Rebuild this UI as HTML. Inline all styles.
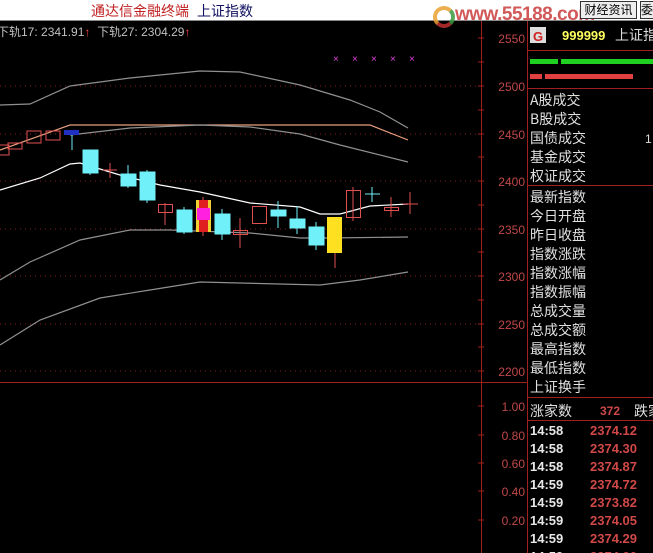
<!DOCTYPE html><html><head><meta charset="utf-8"><style>
body{margin:0;width:653px;height:553px;overflow:hidden;background:#000;font-family:"Liberation Sans","Noto Sans CJK SC",sans-serif;position:relative}
.t{position:absolute;white-space:nowrap}
</style></head><body>
<div style="position:absolute;left:0;top:0;width:653px;height:20px;background:#fff;border-bottom:1px solid #888"></div>
<div class="t" style="left:91px;top:1px;font-size:14px;color:#c02020">通达信金融终端</div>
<div class="t" style="left:197px;top:1px;font-size:14px;color:#101060">上证指数</div>
<div class="t" style="left:455px;top:4px;font-size:19px;font-weight:bold;color:#c83030;opacity:.8;letter-spacing:-0.5px">www.55188.com</div>
<div style="position:absolute;left:433px;top:6px;width:14px;height:14px;border-radius:50%;border:4px solid #e9a030;border-right-color:#3a9a40;border-bottom-color:#c03030;opacity:.85"></div>
<div class="t" style="left:580px;top:1px;width:55px;height:16px;border:1px solid #333;background:#eee;font-size:12px;line-height:16px;text-align:center">财经资讯</div>
<div class="t" style="left:640px;top:1px;width:20px;height:16px;border:1px solid #333;background:#eee;font-size:12px;line-height:16px">委</div>
<div class="t" style="left:-3px;top:23px;font-size:12px;color:#c0c0c0">下轨17: 2341.91<span style="color:#f44">↑</span>&nbsp; 下轨27: 2304.29<span style="color:#f44">↑</span></div>
<svg width="653" height="553" style="position:absolute;left:0;top:0" xmlns="http://www.w3.org/2000/svg">
<g stroke="#802020" stroke-dasharray="1,4" stroke-width="1">
<line x1="0" y1="86" x2="480" y2="86"/><line x1="0" y1="134" x2="480" y2="134"/><line x1="0" y1="181" x2="480" y2="181"/><line x1="0" y1="229" x2="480" y2="229"/><line x1="0" y1="276" x2="480" y2="276"/><line x1="0" y1="324" x2="480" y2="324"/><line x1="0" y1="371" x2="480" y2="371"/>
</g>
<g stroke="#a02020" stroke-width="1" fill="none">
<line x1="481.5" y1="21" x2="481.5" y2="553"/>
<line x1="527.5" y1="21" x2="527.5" y2="553"/>
<line x1="0" y1="382.5" x2="527" y2="382.5"/>
<line x1="527" y1="50.5" x2="653" y2="50.5"/>
<line x1="527" y1="88.5" x2="653" y2="88.5"/>
<line x1="527" y1="185.5" x2="653" y2="185.5"/>
<line x1="527" y1="397.5" x2="653" y2="397.5"/>
<line x1="527" y1="420.5" x2="653" y2="420.5"/>
</g>
<g stroke="#a02020">
<line x1="478" y1="38" x2="484" y2="38"/><line x1="478" y1="62" x2="484" y2="62"/><line x1="478" y1="86" x2="484" y2="86"/><line x1="478" y1="110" x2="484" y2="110"/><line x1="478" y1="134" x2="484" y2="134"/><line x1="478" y1="157" x2="484" y2="157"/><line x1="478" y1="181" x2="484" y2="181"/><line x1="478" y1="205" x2="484" y2="205"/><line x1="478" y1="229" x2="484" y2="229"/><line x1="478" y1="252" x2="484" y2="252"/><line x1="478" y1="276" x2="484" y2="276"/><line x1="478" y1="300" x2="484" y2="300"/><line x1="478" y1="324" x2="484" y2="324"/><line x1="478" y1="347" x2="484" y2="347"/><line x1="478" y1="371" x2="484" y2="371"/>
<line x1="478" y1="406" x2="484" y2="406"/><line x1="478" y1="435" x2="484" y2="435"/><line x1="478" y1="463" x2="484" y2="463"/><line x1="478" y1="491" x2="484" y2="491"/><line x1="478" y1="520" x2="484" y2="520"/>
</g>
<g fill="none" stroke-width="1.2">
<polyline stroke="#909090" points="0,105 30,104 70,86 130,78 200,71 240,72 300,85 350,100 380,112 408,128"/>
<polyline stroke="#e8a080" points="0,150 70,125 370,125 408,140"/>
<polyline stroke="#909090" points="70,135 130,128 200,125 250,127 300,134 340,145 408,162"/>
<polyline stroke="#ffffff" points="0,190 40,178 70,164 80,163 120,175 160,185 200,192 250,203 300,207 320,214 340,214 370,206 408,204"/>
<polyline stroke="#909090" points="0,280 30,262 80,240 130,230 170,230 250,233 300,238 330,238 408,237"/>
<polyline stroke="#909090" points="0,345 40,320 100,298 150,290 200,282 320,285 360,280 408,272"/>
</g>
<g stroke="#e05050" fill="none" stroke-width="1">
<rect x="-5" y="145" width="14" height="10"/><rect x="8" y="143" width="14" height="6"/><rect x="27" y="131" width="14" height="12"/><rect x="46" y="131" width="14" height="9"/>
<line x1="110" y1="163" x2="110" y2="178"/><line x1="103" y1="170" x2="117" y2="170"/>
<line x1="165" y1="203" x2="165" y2="225"/><rect x="158.5" y="204.5" width="14" height="8"/>
<line x1="240" y1="218" x2="240" y2="248"/><rect x="233.5" y="230.5" width="14" height="4"/>
<rect x="252.5" y="206.5" width="14" height="17"/>
<line x1="353" y1="187" x2="353" y2="221"/><rect x="346.5" y="190.5" width="14" height="27"/>
<line x1="391" y1="197" x2="391" y2="217"/><rect x="384.5" y="207.5" width="14" height="3"/>
<line x1="410" y1="192" x2="410" y2="214"/><line x1="403" y1="204" x2="418" y2="204"/>
</g>
<g stroke="#70f0f8" fill="#70f0f8">
<line x1="72" y1="131" x2="72" y2="150"/>
<line x1="90" y1="150" x2="90" y2="175"/><rect x="83" y="150" width="15" height="23"/>
<line x1="128" y1="165" x2="128" y2="188"/><rect x="121" y="174" width="15" height="12"/>
<line x1="147" y1="170" x2="147" y2="203"/><rect x="140" y="172" width="15" height="28"/>
<line x1="184" y1="207" x2="184" y2="234"/><rect x="177" y="210" width="15" height="22"/>
<line x1="222" y1="209" x2="222" y2="240"/><rect x="215" y="214" width="15" height="20"/>
<line x1="278" y1="201" x2="278" y2="228"/><rect x="271" y="210" width="15" height="6"/>
<line x1="297" y1="206" x2="297" y2="234"/><rect x="290" y="219" width="15" height="9"/>
<line x1="316" y1="222" x2="316" y2="250"/><rect x="309" y="227" width="15" height="18"/>
<line x1="372" y1="187" x2="372" y2="202"/><line x1="365" y1="194" x2="380" y2="194"/>
</g>
<rect x="64" y="130" width="15" height="5" fill="#2030c0"/>
<line x1="203" y1="197" x2="203" y2="236" stroke="#e05050"/>
<rect x="196" y="200" width="15" height="32" fill="#f0d030"/><rect x="199" y="200" width="9" height="32" fill="#e02020"/><rect x="197" y="208" width="13" height="12" fill="#ff20e0"/>
<line x1="335" y1="253" x2="335" y2="268" stroke="#e05050"/>
<rect x="327" y="217" width="15" height="36" fill="#ffe020"/>
<g fill="#e040e0" font-size="10"><text x="333" y="62">×</text><text x="352" y="62">×</text><text x="371" y="62">×</text><text x="390" y="62">×</text><text x="409" y="62">×</text></g>
<g fill="#c04848" font-size="12" text-anchor="end" font-family="Liberation Sans">
<text x="525" y="43">2550</text><text x="525" y="91">2500</text><text x="525" y="139">2450</text><text x="525" y="186">2400</text><text x="525" y="234">2350</text><text x="525" y="281">2300</text><text x="525" y="329">2250</text><text x="525" y="376">2200</text>
<text x="525" y="411">1.00</text><text x="525" y="440">0.80</text><text x="525" y="468">0.60</text><text x="525" y="496">0.40</text><text x="525" y="525">0.20</text>
</g>
<rect x="530" y="27" width="16" height="16" fill="#ddd"/><text x="533" y="41" fill="#d02020" font-size="13" font-weight="bold">G</text>
<text x="562" y="40" fill="#ffff60" font-size="13" font-weight="bold">999999</text>
<text x="615" y="40" fill="#ddd" font-size="14" font-family="Noto Sans CJK SC">上证指</text>
<rect x="530" y="59" width="28" height="5" fill="#20d020"/><rect x="561" y="59" width="92" height="5" fill="#20d020"/>
<rect x="530" y="74" width="12" height="5" fill="#e04040"/><rect x="545" y="74" width="88" height="5" fill="#e04040"/>
<g fill="#e0e0e0" font-size="14" font-family="Noto Sans CJK SC">
<text x="530" y="105">A股成交</text><text x="530" y="124">B股成交</text><text x="530" y="143">国债成交</text><text x="530" y="162">基金成交</text><text x="530" y="181">权证成交</text>
<text x="530" y="202">最新指数</text><text x="530" y="221">今日开盘</text><text x="530" y="240">昨日收盘</text><text x="530" y="259">指数涨跌</text><text x="530" y="278">指数涨幅</text><text x="530" y="297">指数振幅</text><text x="530" y="316">总成交量</text><text x="530" y="335">总成交额</text><text x="530" y="354">最高指数</text><text x="530" y="373">最低指数</text><text x="530" y="392">上证换手</text>
<text x="530" y="416">涨家数</text><text x="634" y="416">跌家</text>
</g>
<text x="645" y="143" fill="#ddd" font-size="12">1</text>
<text x="600" y="415" fill="#d04848" font-size="12" font-weight="bold">372</text>
<g font-size="13" font-weight="bold">
<g fill="#e8e8e8"><text x="530" y="435">14:58</text><text x="530" y="453">14:58</text><text x="530" y="471">14:58</text><text x="530" y="489">14:59</text><text x="530" y="507">14:59</text><text x="530" y="525">14:59</text><text x="530" y="543">14:59</text><text x="530" y="561">14:59</text></g>
<g fill="#d04848"><text x="590" y="435">2374.12</text><text x="590" y="453">2374.30</text><text x="590" y="471">2374.87</text><text x="590" y="489">2374.72</text><text x="590" y="507">2373.82</text><text x="590" y="525">2374.05</text><text x="590" y="543">2374.29</text><text x="590" y="561">2374.00</text></g>
</g>
</svg>
</body></html>
